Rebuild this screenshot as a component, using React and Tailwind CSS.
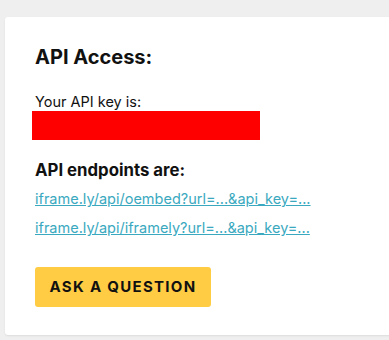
export default function App() {
  return (
    <div className="w-[389px] h-[340px] overflow-hidden bg-[#efefef] pt-[17px] pl-[5px]" style={{ fontFamily: 'Inter, Lato, sans-serif' }}>
      <div className="w-[400px] h-[318px] bg-white rounded-[3px] shadow-[0_1px_2px_rgba(0,0,0,0.08)] pl-[30px] pt-[28px]">
        <h2 className="text-[20px] leading-[24px] font-bold text-[#111]">API Access:</h2>
        <p className="mt-[24px] text-[14.5px] leading-[17px] text-[#111]">Your API key is:</p>
        <div className="-ml-[3px] mt-[1px] w-[228px] h-[29px] bg-[#ff0000]"></div>
        <h3 className="mt-[20px] text-[16.8px] leading-[20px] font-bold text-[#111]">API endpoints are:</h3>
        <div className="mt-[10px] flex flex-col gap-[12px]">
          <a href="#" className="text-[14.5px] leading-[17px] text-[#3aa9c0] underline">iframe.ly/api/oembed?url=...&amp;api_key=...</a>
          <a href="#" className="text-[14.5px] leading-[17px] text-[#3aa9c0] underline">iframe.ly/api/iframely?url=...&amp;api_key=...</a>
        </div>
        <button className="mt-[31px] w-[176px] h-[40px] rounded-[3px] bg-[#ffcc44] text-[15px] font-bold tracking-[1.3px] text-[#111]">ASK A QUESTION</button>
      </div>
    </div>
  );
}
